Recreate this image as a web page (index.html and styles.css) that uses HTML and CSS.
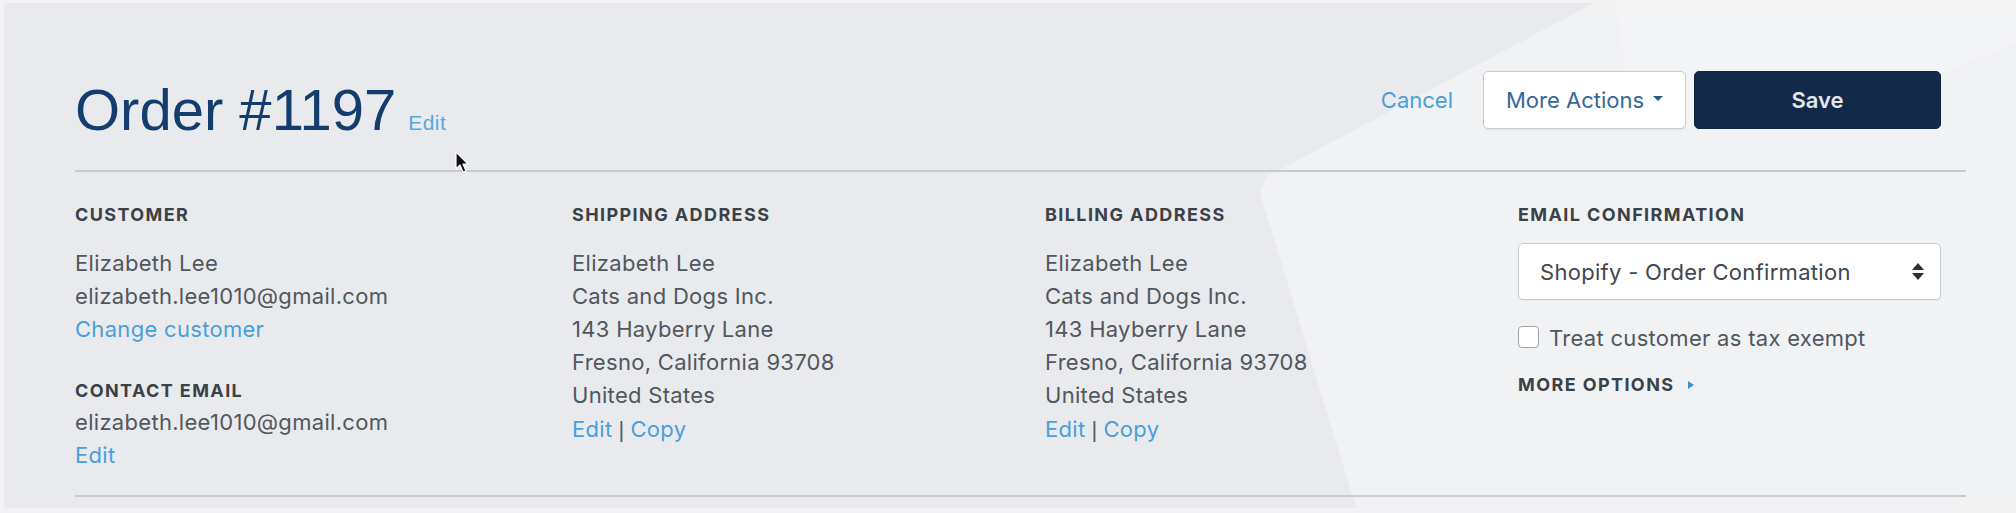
FILE: index.html
```html
<!DOCTYPE html>
<html lang="en">
<head>
<meta charset="utf-8">
<title>Order #1197</title>
<link rel="stylesheet" href="styles.css">
</head>
<body>
<div class="frame">
  <svg class="bg" width="2012" height="505" viewBox="0 0 2012 505" aria-hidden="true">
    <polygon class="bg-light" points="1590,0 2012,0 2012,505 1352,505 1256,190 1262,174"/>
    <path class="bg-lighter" d="M1612 0 L2012 0 L2012 40 Q1900 90 1760 120 Q1640 140 1625 90 Z"/>
  </svg>
  <div class="page">
    <header class="header">
      <div class="title-wrap">
        <h1 class="title">Order #1197</h1>
        <a class="link title-edit">Edit</a>
      </div>
      <div class="actions">
        <a class="link cancel">Cancel</a>
        <button class="btn btn-secondary">More Actions<span class="caret-down"></span></button>
        <button class="btn btn-primary">Save</button>
      </div>
    </header>
    <section class="details">
      <div class="col">
        <div class="label">Customer</div>
        <div class="line">Elizabeth Lee</div>
        <div class="line">elizabeth.lee1010@gmail.com</div>
        <div class="line"><a class="link">Change customer</a></div>
        <div class="label label-sub">Contact Email</div>
        <div class="line">elizabeth.lee1010@gmail.com</div>
        <div class="line"><a class="link">Edit</a></div>
      </div>
      <div class="col">
        <div class="label">Shipping Address</div>
        <div class="line">Elizabeth Lee</div>
        <div class="line">Cats and Dogs Inc.</div>
        <div class="line">143 Hayberry Lane</div>
        <div class="line">Fresno, California 93708</div>
        <div class="line">United States</div>
        <div class="line"><a class="link">Edit</a><span class="sep">|</span><a class="link">Copy</a></div>
      </div>
      <div class="col">
        <div class="label">Billing Address</div>
        <div class="line">Elizabeth Lee</div>
        <div class="line">Cats and Dogs Inc.</div>
        <div class="line">143 Hayberry Lane</div>
        <div class="line">Fresno, California 93708</div>
        <div class="line">United States</div>
        <div class="line"><a class="link">Edit</a><span class="sep">|</span><a class="link">Copy</a></div>
      </div>
      <div class="col">
        <div class="label label-tight">Email Confirmation</div>
        <div class="select">
          <span>Shopify - Order Confirmation</span>
          <svg class="select-arrows" width="12" height="17" viewBox="0 0 12 17" aria-hidden="true">
            <path d="M6 0 L12 7 L0 7 Z"/>
            <path d="M0 10 L12 10 L6 17 Z"/>
          </svg>
        </div>
        <label class="check-row"><span class="checkbox"></span>Treat customer as tax exempt</label>
        <div class="label more-options">More Options<span class="caret-right"></span></div>
      </div>
    </section>
  </div>
  <svg class="cursor" width="16" height="24" viewBox="0 0 16 24" aria-hidden="true">
    <path d="M1 1 L1 18 L5 14 L8 21 L11 20 L8 13 L13 13 Z" fill="#111" stroke="#fff" stroke-width="1.2" stroke-linejoin="round"/>
  </svg>
</div>
</body>
</html>
```

FILE: styles.css
```css
* { box-sizing: border-box; }

html, body {
  margin: 0;
  padding: 0;
}

body {
  background: #f3f3f4;
  width: 2016px;
  height: 513px;
  overflow: hidden;
  font-family: Inter, "Liberation Sans", Arial, sans-serif;
}

.frame {
  position: relative;
  margin: 3px 0 0 4px;
  width: 2012px;
  height: 505px;
  background: #e9eaed;
  overflow: hidden;
}

.bg {
  position: absolute;
  left: 0;
  top: 0;
}

.bg-light { fill: #f1f2f4; }
.bg-lighter { fill: #f3f4f6; }

.page {
  position: relative;
  padding: 0 50px 0 71px;
}

.header {
  display: flex;
  justify-content: space-between;
  align-items: flex-start;
  height: 169px;
  padding: 68px 25px 0 0;
  border-bottom: 2px solid #c6cbd1;
}

.title-wrap {
  display: flex;
  align-items: baseline;
  gap: 12px;
  margin-top: 9px;
}

.title {
  margin: 0;
  font-family: "Liberation Sans", Arial, sans-serif;
  font-weight: 400;
  font-size: 58px;
  line-height: 60px;
  color: #133d6c;
  letter-spacing: 0;
}

.link {
  color: #4a9fd9;
  text-decoration: none;
  cursor: pointer;
}

.title-edit {
  font-family: "Liberation Sans", Arial, sans-serif;
  font-size: 21px;
  letter-spacing: 0.4px;
  color: #5aa7dc;
}

.actions {
  display: flex;
  align-items: center;
  height: 58px;
}

.cancel {
  font-size: 22px;
  margin-right: 30px;
  color: #4b9fd7;
}

.btn {
  height: 58px;
  border-radius: 5px;
  font-family: Inter, "Liberation Sans", Arial, sans-serif;
  font-size: 22px;
  display: flex;
  align-items: center;
  justify-content: center;
  padding: 0;
  cursor: pointer;
}

.btn-secondary {
  width: 203px;
  background: #ffffff;
  border: 1px solid #c5ccd3;
  color: #33689b;
  box-shadow: 0 1px 1px rgba(0, 0, 0, 0.06);
  margin-right: 8px;
}

.caret-down {
  display: inline-block;
  width: 0;
  height: 0;
  margin-left: 9px;
  border-left: 5px solid transparent;
  border-right: 5px solid transparent;
  border-top: 5px solid #2d5987;
  position: relative;
  top: -2px;
}

.btn-primary {
  width: 247px;
  background: #13294a;
  border: 1px solid #0f2240;
  color: #e3e7ec;
  font-weight: 600;
}

.details {
  display: grid;
  grid-template-columns: 497px 473px 473px 1fr;
  padding: 32px 0 22px 0;
  border-bottom: 2px solid #c9ccd0;
}

.label {
  font-weight: 700;
  font-size: 18px;
  line-height: 22px;
  letter-spacing: 1.4px;
  text-transform: uppercase;
  color: #3a4147;
  margin-bottom: 20.5px;
}

.label-sub {
  margin-top: 34px;
  margin-bottom: 4px;
}

.label-tight {
  margin-bottom: 17px;
}

.line {
  font-size: 22px;
  line-height: 33.2px;
  letter-spacing: 0.3px;
  color: #50575e;
  white-space: nowrap;
}

.sep {
  font-family: "Liberation Sans", Arial, sans-serif;
  color: #555b61;
  margin: 0 6px;
}

.select {
  width: 423px;
  height: 57px;
  background: #ffffff;
  border: 1px solid #c5ccd3;
  border-radius: 5px;
  box-shadow: 0 1px 1px rgba(0, 0, 0, 0.05);
  display: flex;
  align-items: center;
  justify-content: space-between;
  padding: 0 16px 0 21px;
  font-size: 22px;
  letter-spacing: 0.3px;
  color: #40474d;
}

.select-arrows path { fill: #2a3036; }

.check-row {
  display: flex;
  align-items: center;
  margin-top: 22px;
  font-size: 22px;
  line-height: 33.2px;
  letter-spacing: 0.3px;
  color: #50575e;
}

.checkbox {
  width: 21px;
  height: 22px;
  border: 1.5px solid #9ea3a9;
  border-radius: 4px;
  background: #ffffff;
  margin-right: 10px;
  position: relative;
  top: -2px;
}

.more-options {
  display: flex;
  align-items: center;
  margin-top: 19px;
}

.caret-right {
  display: inline-block;
  width: 0;
  height: 0;
  margin-left: 14px;
  border-top: 4.5px solid transparent;
  border-bottom: 4.5px solid transparent;
  border-left: 6px solid #3d92d2;
}

.cursor {
  position: absolute;
  left: 451px;
  top: 148px;
}
```
